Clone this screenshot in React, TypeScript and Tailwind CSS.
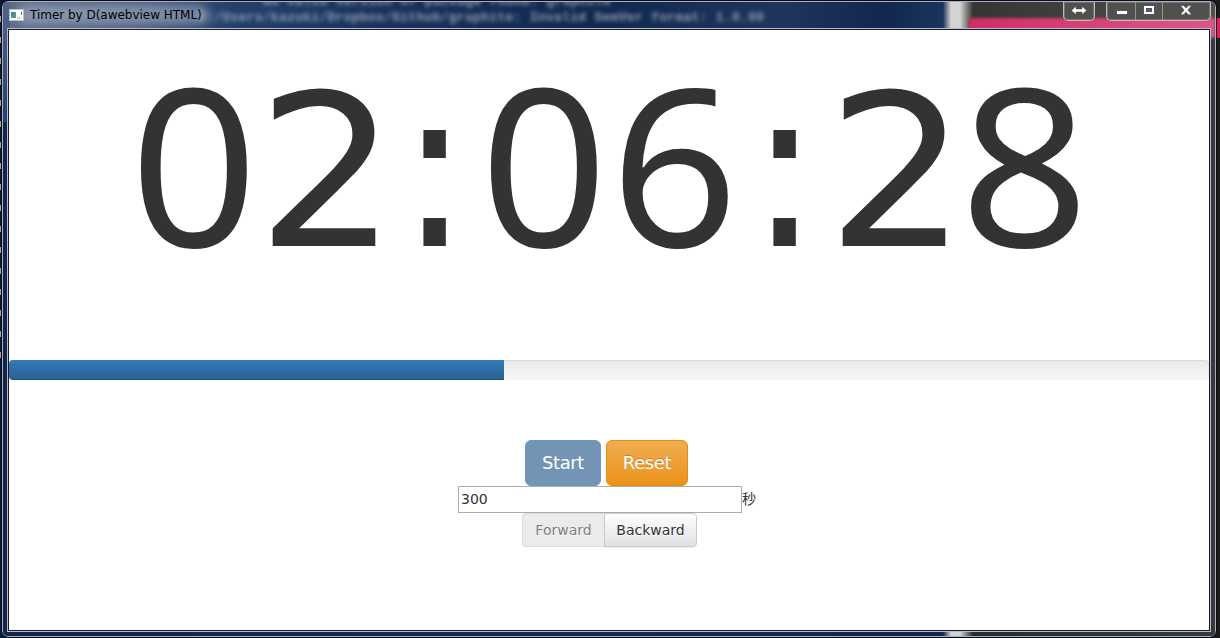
import React from "react";

const digits: { ch: string; cls: string }[] = [
  { ch: "0", cls: "w-[130px] -mt-[10px] font-['Noto_Sans'] text-[219px] scale-x-[1.02]" },
  { ch: "2", cls: "w-[131px] pl-[5px] text-[213px] scale-x-[1.04]" },
  { ch: ":", cls: "w-[89px] text-[217px] -mt-px origin-[50%_205px] scale-y-[1.035]" },
  { ch: "0", cls: "w-[130px] -mt-[10px] font-['Noto_Sans'] text-[219px] scale-x-[1.02]" },
  { ch: "6", cls: "w-[131px] -mt-[10px] font-['Noto_Sans'] text-[219px] scale-x-[1.02]" },
  { ch: ":", cls: "w-[89px] text-[217px] -mt-px origin-[50%_205px] scale-y-[1.035]" },
  { ch: "2", cls: "w-[131px] pl-[5px] text-[213px] scale-x-[1.04]" },
  { ch: "8", cls: "w-[130px] -mt-[10px] pr-px font-['Noto_Sans'] text-[219px] scale-x-[1.03]" },
];

function AppIcon() {
  return (
    <svg width="15" height="12" viewBox="0 0 15 12" className="mt-[6px] ml-[6px] shrink-0" shapeRendering="crispEdges">
      <rect width="15" height="12" fill="#b9bdc4" />
      <rect x="1" y="1" width="13" height="10" fill="#fff" />
      <rect x="2" y="3" width="5" height="6" fill="#4d9a94" />
      <rect x="2" y="3" width="3" height="3" fill="#4c82a8" />
      <rect x="12" y="3" width="1" height="3" fill="#39729b" />
      <rect x="8" y="8" width="3" height="2" fill="#cfcfcf" />
      <rect x="12" y="8" width="1" height="1" fill="#a7c7b8" />
    </svg>
  );
}

function WindowControls() {
  return (
    <div className="-mt-px ml-auto flex h-[20px] items-start">
      <div className="mr-[11px] flex h-[19px] w-[32px] items-center justify-center rounded-b-[5px] border border-t-0 border-[#c2b9b9] bg-[#50504c] shadow-[inset_0_0_0_1px_#77706f]">
        <svg width="16" height="9" viewBox="0 0 16 9" className="-mt-px shrink-0">
          <path d="M.4 4.5 5 .4V3h6V.4l4.6 4.1L11 8.6V6H5v2.6z" fill="#fff" stroke="#44494e" strokeWidth=".4" />
        </svg>
      </div>
      <div className="mr-[4px] flex h-[19px] w-[105px] overflow-hidden rounded-b-[5px] border border-t-0 border-[#c2b9b9] bg-[#50504c] shadow-[inset_0_0_0_1px_#77706f]">
        <div className="w-[29px] border-r border-[#969090]">
          <svg width="28" height="18" shapeRendering="crispEdges">
            <rect x="9" y="8" width="12" height="5" fill="#4b5670" />
            <rect x="10" y="9" width="10" height="3" fill="#fff" />
          </svg>
        </div>
        <div className="w-[27px] border-r border-[#969090]">
          <svg width="26" height="18" shapeRendering="crispEdges">
            <path d="M7 3h12v10H7z" fill="#4b5670" />
            <path d="M8 4h10v8H8z" fill="#fff" />
            <path d="M10 6h6v4h-6z" fill="#4b5670" />
            <path d="M11 7h4v2h-4z" fill="#62625f" />
          </svg>
        </div>
        <svg width="47" height="18">
          <path d="M17.5 3.8h3.4l2.1 2.4 2.1-2.4h3.4L24.8 8l3.7 4.4h-3.4L23 9.9l-2.1 2.5h-3.4L21.2 8z" fill="#fff" stroke="#4b5670" strokeWidth=".5" />
        </svg>
      </div>
    </div>
  );
}

function TitleBar() {
  return (
    <div className="relative flex h-[26px] items-start">
      <AppIcon />
      <span className="mt-[4px] ml-[6px] w-[174px] text-[12px] leading-[16px] tracking-[-0.02px] whitespace-nowrap text-black">
        Timer by D(awebview HTML)
      </span>
      <WindowControls />
    </div>
  );
}

function Backdrop() {
  return (
    <div className="absolute inset-0 overflow-hidden">
      <div className="absolute inset-0 bg-[linear-gradient(to_right,#5d6e8c_0,#4c5f82_130px,#22406c_230px,#17315a_400px,#10294f_600px,#1e365d_780px,#10284f_880px,#1b345d_940px,#d3d3d3_948px,#d3d3d3_957px,#353532_970px,#50504b_1214px)]" />
      <div className="absolute inset-x-0 top-[34px] bottom-0 bg-[linear-gradient(to_right,#10264a_0,#132c53_500px,#0d274e_940px,#d3d3d3_948px,#d3d3d3_957px,#2b2b2a_970px,#393939_1214px)]" />
      <div className="absolute top-0 left-0 h-[120px] w-[7px] bg-linear-to-b from-[#51658a] to-[#263f6c]" />
      <div className="absolute top-[16px] right-0 left-[966px] h-[20px] bg-linear-to-r from-[#cf2d66] to-[#dd5489] blur-[1.5px]" />
      <div className="absolute top-[3px] left-[14px] h-[19px] w-[192px] rounded-full bg-[#b1bac9]/55 blur-[5px]" />
      <div className="absolute -top-[8px] left-[195px] font-['Liberation_Mono'] text-[13px] leading-[16px] font-bold whitespace-pre text-[#a8afc3] opacity-85 blur-[2px]">
        <div className="tracking-[0.3px]">{"        No valid version of package found: graphite"}</div>
        <div className="tracking-[0.29px]">{"C:/Users/kazuki/Dropbox/Github/graphite: Invalid SemVer format: 1.0.00"}</div>
      </div>
    </div>
  );
}

export default function App() {
  return (
    <div className="flex h-[638px] w-[1220px] items-start overflow-hidden bg-[linear-gradient(to_right,#061a3c_0,#061a3c_944px,#1b1b1a_970px)] pt-px font-['DejaVu_Sans','Noto_Sans_CJK_JP',sans-serif] text-[#333]">
      <div className="h-[370px] w-px bg-[repeating-linear-gradient(to_bottom,transparent_0,transparent_15px,#bb9b82_15px,#bb9b82_21px)]" />
      <div className="relative ml-px h-[636px] w-[1214px] shrink-0 overflow-hidden rounded-[6px] border border-[#a8afbd] outline outline-[#080b18]">
        <Backdrop />
        <div className="relative mt-px">
          <TitleBar />
          <main className="ml-[5px] h-[602px] w-[1202px] bg-white outline outline-[#b9bac6]">
            <div className="h-full w-full border border-[#171b2c]">
              <div className="flex h-[330px] pt-[16px] pl-[120px]">
                {digits.map((d, i) => (
                  <span key={i} className={`${d.cls} flex h-[252px] shrink-0 justify-center leading-[252px]`}>
                    {d.ch}
                  </span>
                ))}
              </div>
              <div className="h-[20px] overflow-hidden rounded-[4px] bg-linear-to-b from-[#ebebeb] to-[#f5f5f5] shadow-[inset_0_1px_2px_rgba(0,0,0,0.1)]">
                <div className="h-full w-[495px] bg-linear-to-b from-[#337ab7] to-[#286090] shadow-[inset_0_-1px_0_rgba(0,0,0,0.15)]" />
              </div>
              <div className="mt-[60px] flex flex-col">
                <div className="ml-[516px] flex h-[46px] gap-[5px] text-[18px] text-white">
                  <button className="w-[76px] rounded-[6px] border border-[#6e98c0] bg-[#7394b4] pb-px tracking-[-0.4px]">Start</button>
                  <button className="w-[82px] rounded-[6px] border border-[#e38d13] bg-linear-to-b from-[#f0ad4e] to-[#eb9316] pb-px tracking-[-0.4px] [text-shadow:0_-1px_0_rgba(0,0,0,0.2)]">
                    Reset
                  </button>
                </div>
                <div className="ml-[449px] flex h-[27px] items-center text-[14px]">
                  <input defaultValue="300" className="h-[27px] w-[284px] border border-[#abadb3] bg-white px-[2px] pb-[2px] outline-none" />
                  <span className="pb-[2px] leading-[20px]">秒</span>
                </div>
                <div className="ml-[513px] flex h-[34px] text-[14px]">
                  <button className="w-[82px] rounded-l-[4px] border border-r-0 border-[#dcdcdc] bg-[#ebebeb] text-[#808080] [text-shadow:0_1px_0_#fff]">
                    Forward
                  </button>
                  <button className="w-[93px] rounded-r-[4px] border border-[#ccc] bg-linear-to-b from-white to-[#e0e0e0] shadow-[0_1px_1px_rgba(0,0,0,0.075)] [text-shadow:0_1px_0_#fff]">
                    Backward
                  </button>
                </div>
              </div>
            </div>
          </main>
        </div>
      </div>
      <div className="mt-[17px] ml-auto h-[20px] w-[3px] bg-[#e51c62]" />
    </div>
  );
}
